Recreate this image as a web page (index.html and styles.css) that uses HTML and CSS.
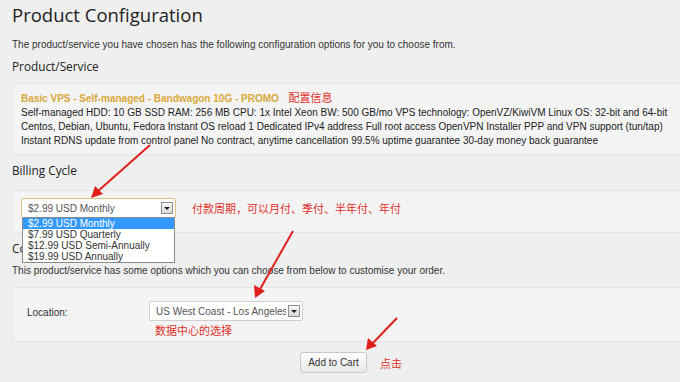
FILE: index.html
```html
<!DOCTYPE html>
<html lang="en">
    <head>
        <meta charset="UTF-8">
        <meta name="viewport" content="width=device-width, initial-scale=1.0">
        <title>Product Configuration</title>
        <link rel="stylesheet" href="styles.css">
    </head>
    <body>
        <div class="page">
            <h1>Product Configuration</h1>
            <p class="intro">The product/service you have chosen has the following configuration options for you to choose from.</p>

            <h2>Product/Service</h2>
            <div class="well">
                <div class="product-name">Basic VPS - Self-managed - Bandwagon 10G - PROMO <span class="note">配置信息</span></div>
                <div class="product-desc">
                    Self-managed HDD: 10 GB SSD RAM: 256 MB CPU: 1x Intel Xeon BW: 500 GB/mo VPS technology: OpenVZ/KiwiVM Linux OS: 32-bit and 64-bit<br>
                    Centos, Debian, Ubuntu, Fedora Instant OS reload 1 Dedicated IPv4 address Full root access OpenVPN Installer PPP and VPN support (tun/tap)<br>
                    Instant RDNS update from control panel No contract, anytime cancellation 99.5% uptime guarantee 30-day money back guarantee
                </div>
            </div>

            <h2>Billing Cycle</h2>
            <div class="well billing">
                <div class="select-wrap">
                    <div class="select focused">
                        <span class="select-value">$2.99 USD Monthly</span>
                        <span class="select-btn"></span>
                    </div>
                    <ul class="options">
                        <li class="selected">$2.99 USD Monthly</li>
                        <li>$7.99 USD Quarterly</li>
                        <li>$12.99 USD Semi-Annually</li>
                        <li>$19.99 USD Annually</li>
                    </ul>
                </div>
                <span class="note">付款周期，可以月付、季付、半年付、年付</span>
            </div>

            <h2>Configurable Options</h2>
            <p class="intro sub">This product/service has some options which you can choose from below to customise your order.</p>
            <div class="well config">
                <label class="field-label">Location:</label>
                <div class="field-input">
                    <div class="select loc">
                        <span class="select-value">US West Coast - Los Angeles (USCA_2)</span>
                        <span class="select-btn"></span>
                    </div>
                    <span class="note">数据中心的选择</span>
                </div>
            </div>

            <div class="actions">
                <button>Add to Cart</button>
                <span class="note">点击</span>
            </div>

            <!-- red annotation arrows drawn over the page -->
            <svg class="marks" width="680" height="382" viewBox="0 0 680 382">
                <g stroke="#e0201c" stroke-width="2" fill="#e0201c">
                    <line x1="150" y1="145" x2="97" y2="192"/>
                    <polygon points="91,198 95,186 103,194" stroke="none"/>
                    <line x1="293" y1="231" x2="259" y2="291"/>
                    <polygon points="255,298 254,285 265,291" stroke="none"/>
                    <line x1="397" y1="318" x2="371" y2="345"/>
                    <polygon points="366,350 368,338 377,346" stroke="none"/>
                </g>
            </svg>
        </div>
    </body>
</html>
```

FILE: styles.css
```css
body {
margin: 0;
padding: 0;
background-color: #efefef;
font-family: "Liberation Sans", Arial, sans-serif;
font-size: 10px;
color: #333;
overflow: hidden;
}

.page {
position: relative;
padding: 3px 0 0 12px;
height: 379px;
}

h1 {
margin: 0;
font-family: "Open Sans", "Noto Sans", sans-serif;
font-weight: 400;
font-size: 18.5px;
line-height: 24px;
color: #222;
}

h2 {
margin: 7px 0 0;
font-family: "Open Sans", "Noto Sans", sans-serif;
font-weight: 400;
font-size: 11.8px;
line-height: 16px;
color: #222;
}

.intro {
margin: 11px 0 0;
line-height: 13px;
}

.intro.sub {
margin-top: 8px;
}

.note {
font-family: "Noto Sans CJK SC", sans-serif;
font-size: 11px;
color: #e0302a;
}

/* Wells */
.well {
background-color: #f4f4f4;
border: 1px solid #e6e6e6;
border-radius: 3px;
margin: 9px -10px 0 0;
padding: 6px 8px 6px;
}

.product-name {
font-weight: bold;
color: #d8a83a;
line-height: 15px;
}

.product-name .note {
font-weight: normal;
margin-left: 7px;
}

.product-desc {
line-height: 14px;
color: #222;
}

/* Billing */
.billing {
display: flex;
align-items: center;
gap: 16px;
margin-top: 12px;
padding: 7px 8px 14px;
}

.select-wrap {
position: relative;
}

.select {
display: flex;
align-items: center;
justify-content: space-between;
gap: 2px;
background-color: #fff;
border: 1px solid #cfcfcf;
border-radius: 2px;
height: 18px;
padding: 0 2px 0 6px;
color: #555;
}

.select.focused {
width: 145px;
border-color: #d9c28a;
}

.select-btn {
width: 12px;
height: 12px;
border: 1px solid #8e8e8e;
background: linear-gradient(#fafafa, #d8d8d8);
position: relative;
box-sizing: border-box;
flex: none;
}

.select-btn::after {
content: "";
position: absolute;
left: 2px;
top: 4px;
border-left: 3px solid transparent;
border-right: 3px solid transparent;
border-top: 3px solid #222;
}

.options {
position: absolute;
left: 1px;
top: 19px;
z-index: 2;
width: 151px;
margin: 0;
padding: 0;
list-style: none;
background-color: #fff;
border: 1px solid #8a8a8a;
}

.options li {
height: 11px;
line-height: 11px;
padding-left: 5px;
color: #333;
}

.options li.selected {
background-color: #3399ff;
color: #fff;
}

/* Config */
.config {
display: flex;
align-items: flex-start;
padding: 13px 8px 3px 14px;
margin-top: 10px;
}

.field-label {
width: 122px;
padding-top: 6px;
color: #333;
}

.field-input {
display: flex;
flex-direction: column;
gap: 1px;
}

.select.loc {
width: 144px;
white-space: nowrap;
}

.loc .select-value {
overflow: hidden;
flex: 1;
}

.field-input .note {
padding-left: 6px;
}

/* Actions */
.actions {
display: flex;
align-items: center;
gap: 13px;
margin-top: 10px;
padding-left: 288px;
}

button {
font-family: "Liberation Sans", Arial, sans-serif;
font-size: 10px;
color: #333;
height: 21px;
width: 67px;
padding: 0;
background: linear-gradient(#ffffff, #e8e8e8);
border: 1px solid #c8c8c8;
border-radius: 3px;
}

.marks {
position: absolute;
left: 0;
top: 0;
pointer-events: none;
z-index: 3;
}
```
